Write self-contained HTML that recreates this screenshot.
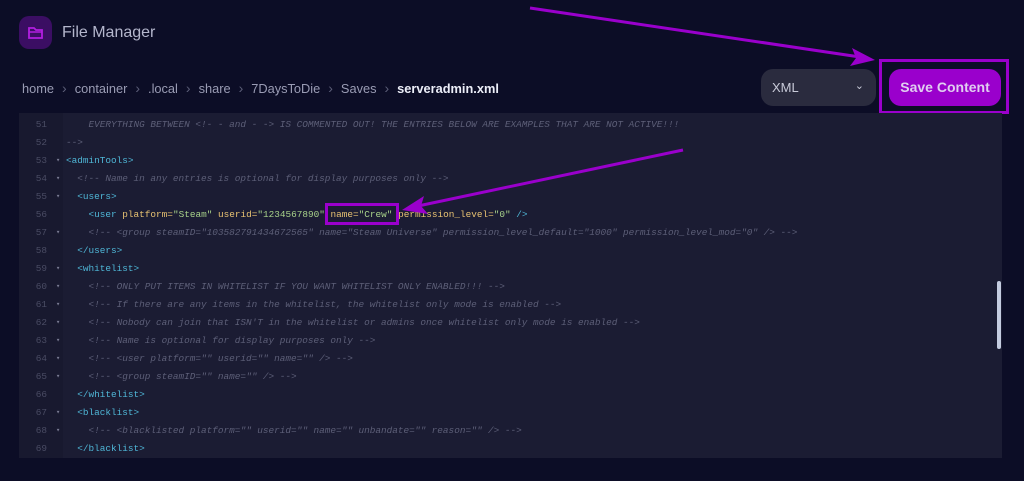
<!DOCTYPE html>
<html><head><meta charset="utf-8"><style>
*{margin:0;padding:0;box-sizing:border-box}
body{width:1024px;height:481px;background:#0c0d26;font-family:"Liberation Sans",sans-serif;position:relative;overflow:hidden}
.logo{position:absolute;left:19px;top:16px;width:33px;height:33px;border-radius:10px;background:#3b0e63}
.title{position:absolute;left:62px;top:24px;font-size:16px;color:#b4b6cc}
.crumb{position:absolute;left:22px;top:80px;font-size:12.8px;color:#9a9cb4;white-space:nowrap}
.crumb .s{color:#5c5e78;margin:0 8px;font-size:14px}
.crumb b{color:#eceef8;font-weight:bold}
.sel{position:absolute;left:761px;top:69px;width:115px;height:37px;border-radius:12px;background:#2a2b3e;color:#c8cad8;font-size:13px;padding:11px 0 0 11px}
.btn{position:absolute;left:889px;top:69px;width:112px;height:37px;border-radius:12px;background:#9a00cc;color:#e0cdf0;font-size:14px;font-weight:bold;text-align:center;line-height:37px}
.box{position:absolute;border:3px solid #9a00cc}
.ed{position:absolute;left:19px;top:113px;width:983px;height:345px;background:#1b1c33}
.gut{position:absolute;left:19px;top:113px;width:44px;height:345px;background:#18192f}
.ln{position:absolute;left:19px;width:1000px;height:18px;font-family:"Liberation Mono",monospace;font-size:9.4px;line-height:18px;white-space:pre}
.n{position:absolute;left:0;width:28px;text-align:right;color:#4a4c64}
.f{position:absolute;left:37px;color:#7a7c94;font-size:7px}
.c{position:absolute;left:47px}
.cm{color:#5d5f78;font-style:italic}
.t{color:#4fb6d6}
.a{color:#e8c272}
.v{color:#a8d28a}
.sb{position:absolute;left:997px;top:281px;width:4px;height:68px;border-radius:2px;background:#c4cce0}
</style></head><body>
<div class="logo"><svg width="33" height="33" viewBox="0 0 33 33"><path d="M10 12h5l2 2h6v8h-13z" fill="none" stroke="#b21ee0" stroke-width="1.8"/><path d="M10 16h13" stroke="#b21ee0" stroke-width="1.5"/></svg></div>
<div class="title">File Manager</div>
<div class="crumb">home<span class="s">›</span>container<span class="s">›</span>.local<span class="s">›</span>share<span class="s">›</span>7DaysToDie<span class="s">›</span>Saves<span class="s">›</span><b>serveradmin.xml</b></div>
<div class="sel">XML<span style="position:absolute;right:12px;top:10px;font-size:11px">⌄</span></div>
<div class="btn">Save Content</div>
<div class="box" style="left:879px;top:59px;width:130px;height:55px"></div>
<div class="ed"></div><div class="gut"></div>
<div class="ln" style="top:116px"><span class="n">51</span><span class="c cm">    EVERYTHING BETWEEN &lt;!- - and - -&gt; IS COMMENTED OUT! THE ENTRIES BELOW ARE EXAMPLES THAT ARE NOT ACTIVE!!!</span></div>
<div class="ln" style="top:134px"><span class="n">52</span><span class="c cm">--&gt;</span></div>
<div class="ln" style="top:152px"><span class="n">53</span><span class="f">▾</span><span class="c t">&lt;adminTools&gt;</span></div>
<div class="ln" style="top:170px"><span class="n">54</span><span class="f">▾</span><span class="c cm">  &lt;!-- Name in any entries is optional for display purposes only --&gt;</span></div>
<div class="ln" style="top:188px"><span class="n">55</span><span class="f">▾</span><span class="c t">  &lt;users&gt;</span></div>
<div class="ln" style="top:206px"><span class="n">56</span><span class="c">    <span class="t">&lt;user</span> <span class="a">platform=</span><span class="v">"Steam"</span> <span class="a">userid=</span><span class="v">"1234567890"</span> <span class="a">name=</span><span class="v">"Crew"</span> <span class="a">permission_level=</span><span class="v">"0"</span> <span class="t">/&gt;</span></span></div>
<div class="ln" style="top:224px"><span class="n">57</span><span class="f">▾</span><span class="c cm">    &lt;!-- &lt;group steamID="103582791434672565" name="Steam Universe" permission_level_default="1000" permission_level_mod="0" /&gt; --&gt;</span></div>
<div class="ln" style="top:242px"><span class="n">58</span><span class="c t">  &lt;/users&gt;</span></div>
<div class="ln" style="top:260px"><span class="n">59</span><span class="f">▾</span><span class="c t">  &lt;whitelist&gt;</span></div>
<div class="ln" style="top:278px"><span class="n">60</span><span class="f">▾</span><span class="c cm">    &lt;!-- ONLY PUT ITEMS IN WHITELIST IF YOU WANT WHITELIST ONLY ENABLED!!! --&gt;</span></div>
<div class="ln" style="top:296px"><span class="n">61</span><span class="f">▾</span><span class="c cm">    &lt;!-- If there are any items in the whitelist, the whitelist only mode is enabled --&gt;</span></div>
<div class="ln" style="top:314px"><span class="n">62</span><span class="f">▾</span><span class="c cm">    &lt;!-- Nobody can join that ISN'T in the whitelist or admins once whitelist only mode is enabled --&gt;</span></div>
<div class="ln" style="top:332px"><span class="n">63</span><span class="f">▾</span><span class="c cm">    &lt;!-- Name is optional for display purposes only --&gt;</span></div>
<div class="ln" style="top:350px"><span class="n">64</span><span class="f">▾</span><span class="c cm">    &lt;!-- &lt;user platform="" userid="" name="" /&gt; --&gt;</span></div>
<div class="ln" style="top:368px"><span class="n">65</span><span class="f">▾</span><span class="c cm">    &lt;!-- &lt;group steamID="" name="" /&gt; --&gt;</span></div>
<div class="ln" style="top:386px"><span class="n">66</span><span class="c t">  &lt;/whitelist&gt;</span></div>
<div class="ln" style="top:404px"><span class="n">67</span><span class="f">▾</span><span class="c t">  &lt;blacklist&gt;</span></div>
<div class="ln" style="top:422px"><span class="n">68</span><span class="f">▾</span><span class="c cm">    &lt;!-- &lt;blacklisted platform="" userid="" name="" unbandate="" reason="" /&gt; --&gt;</span></div>
<div class="ln" style="top:440px"><span class="n">69</span><span class="c t">  &lt;/blacklist&gt;</span></div>
<div class="sb"></div>
<div class="box" style="left:325px;top:203px;width:74px;height:22px"></div>
<svg style="position:absolute;left:0;top:0" width="1024" height="481">
<line x1="530" y1="8" x2="860" y2="57" stroke="#9a00cc" stroke-width="3"/>
<path d="M875 60 L852 48 L856 58 L850 66 Z" fill="#9a00cc"/>
<line x1="683" y1="150" x2="418" y2="206" stroke="#9a00cc" stroke-width="3"/>
<path d="M402 210 L424 196 L421 206 L428 214 Z" fill="#9a00cc"/>
</svg>
</body></html>
